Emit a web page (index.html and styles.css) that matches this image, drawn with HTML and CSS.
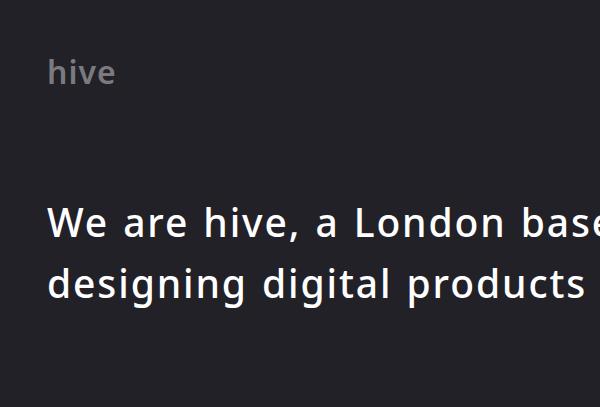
FILE: index.html
```html
<!DOCTYPE html>
<html lang="en">
<head>
<meta charset="utf-8">
<title>hive</title>
<link rel="stylesheet" href="styles.css">
</head>
<body>
<div class="page">
  <header class="header">
    <span class="logo">hive</span>
  </header>
  <section class="hero">
    <h1 class="headline">We are hive, a London based studio<br>designing digital products &amp; experiences</h1>
  </section>
</div>
</body>
</html>
```
FILE: styles.css
```css
html, body {
  margin: 0;
  padding: 0;
  background: #222127;
  overflow: hidden;
}
.page {
  padding: 52px 48px 0 47px;
  font-family: "Noto Sans", "Lato", sans-serif;
}
.header {
  display: flex;
}
.logo {
  color: #7b7a80;
  font-size: 32px;
  font-weight: 600;
  line-height: 40px;
  letter-spacing: 1px;
}
.hero {
  padding-top: 99px;
}
.headline {
  margin: 0;
  color: #ffffff;
  font-size: 39px;
  font-weight: 500;
  line-height: 61px;
  letter-spacing: 1.9px;
  word-spacing: 2px;
  white-space: nowrap;
}
```
